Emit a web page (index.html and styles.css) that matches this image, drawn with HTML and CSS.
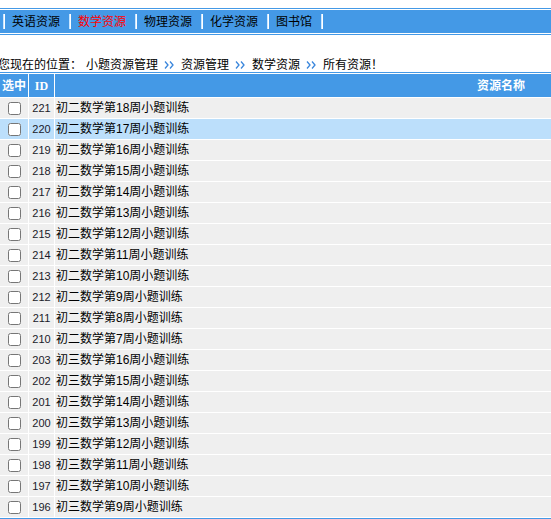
FILE: index.html
```html
<!DOCTYPE html>
<html lang="zh">
<head>
<meta charset="utf-8">
<title>数学资源</title>
<link rel="stylesheet" href="styles.css">
</head>
<body>
<div class="nav">
  <div class="nav-bar">
    <span class="sep"></span><a class="nav-item">英语资源</a>
    <span class="sep"></span><a class="nav-item active">数学资源</a>
    <span class="sep"></span><a class="nav-item">物理资源</a>
    <span class="sep"></span><a class="nav-item">化学资源</a>
    <span class="sep"></span><a class="nav-item">图书馆</a>
    <span class="sep"></span>
  </div>
</div>
<div class="crumbs">
  <span class="lead">您现在的位置：</span><span>小题资源管理</span><span class="arr"><svg width="11" height="8" viewBox="0 0 11 8"><path d="M1 0.5 L4 4 L1 7.5 M6 0.5 L9 4 L6 7.5" fill="none" stroke="#3a86dc" stroke-width="1.3"/></svg></span><span>资源管理</span><span class="arr"><svg width="11" height="8" viewBox="0 0 11 8"><path d="M1 0.5 L4 4 L1 7.5 M6 0.5 L9 4 L6 7.5" fill="none" stroke="#3a86dc" stroke-width="1.3"/></svg></span><span>数学资源</span><span class="arr"><svg width="11" height="8" viewBox="0 0 11 8"><path d="M1 0.5 L4 4 L1 7.5 M6 0.5 L9 4 L6 7.5" fill="none" stroke="#3a86dc" stroke-width="1.3"/></svg></span><span>所有资源！</span>
</div>
<table class="list">
  <thead>
    <tr><th class="c-sel">选中</th><th class="c-id">ID</th><th class="c-name">资源名称</th></tr>
  </thead>
  <tbody>
    <tr><td class="c-sel"><input type="checkbox"></td><td class="c-id">221</td><td class="c-name">初二数学第18周小题训练</td></tr>
    <tr class="hl"><td class="c-sel"><input type="checkbox"></td><td class="c-id">220</td><td class="c-name">初二数学第17周小题训练</td></tr>
    <tr><td class="c-sel"><input type="checkbox"></td><td class="c-id">219</td><td class="c-name">初二数学第16周小题训练</td></tr>
    <tr><td class="c-sel"><input type="checkbox"></td><td class="c-id">218</td><td class="c-name">初二数学第15周小题训练</td></tr>
    <tr><td class="c-sel"><input type="checkbox"></td><td class="c-id">217</td><td class="c-name">初二数学第14周小题训练</td></tr>
    <tr><td class="c-sel"><input type="checkbox"></td><td class="c-id">216</td><td class="c-name">初二数学第13周小题训练</td></tr>
    <tr><td class="c-sel"><input type="checkbox"></td><td class="c-id">215</td><td class="c-name">初二数学第12周小题训练</td></tr>
    <tr><td class="c-sel"><input type="checkbox"></td><td class="c-id">214</td><td class="c-name">初二数学第11周小题训练</td></tr>
    <tr><td class="c-sel"><input type="checkbox"></td><td class="c-id">213</td><td class="c-name">初二数学第10周小题训练</td></tr>
    <tr><td class="c-sel"><input type="checkbox"></td><td class="c-id">212</td><td class="c-name">初二数学第9周小题训练</td></tr>
    <tr><td class="c-sel"><input type="checkbox"></td><td class="c-id">211</td><td class="c-name">初二数学第8周小题训练</td></tr>
    <tr><td class="c-sel"><input type="checkbox"></td><td class="c-id">210</td><td class="c-name">初二数学第7周小题训练</td></tr>
    <tr><td class="c-sel"><input type="checkbox"></td><td class="c-id">203</td><td class="c-name">初三数学第16周小题训练</td></tr>
    <tr><td class="c-sel"><input type="checkbox"></td><td class="c-id">202</td><td class="c-name">初三数学第15周小题训练</td></tr>
    <tr><td class="c-sel"><input type="checkbox"></td><td class="c-id">201</td><td class="c-name">初三数学第14周小题训练</td></tr>
    <tr><td class="c-sel"><input type="checkbox"></td><td class="c-id">200</td><td class="c-name">初三数学第13周小题训练</td></tr>
    <tr><td class="c-sel"><input type="checkbox"></td><td class="c-id">199</td><td class="c-name">初三数学第12周小题训练</td></tr>
    <tr><td class="c-sel"><input type="checkbox"></td><td class="c-id">198</td><td class="c-name">初三数学第11周小题训练</td></tr>
    <tr><td class="c-sel"><input type="checkbox"></td><td class="c-id">197</td><td class="c-name">初三数学第10周小题训练</td></tr>
    <tr><td class="c-sel"><input type="checkbox"></td><td class="c-id">196</td><td class="c-name">初三数学第9周小题训练</td></tr>
  </tbody>
</table>
</body>
</html>
```
FILE: styles.css
```css
html, body {
  overflow: hidden;
}
body {
  margin: 0;
  background: #fff;
  font-family: "Liberation Sans", "Noto Sans CJK SC", sans-serif;
  font-size: 12px;
  color: #000;
}
.nav {
  margin-top: 8px;
  border-top: 1px solid #4499e6;
  border-bottom: 1px solid #4499e6;
  padding: 1px 0;
}
.nav-bar {
  height: 23px;
  background: #4499e6;
  display: flex;
  align-items: center;
  padding-left: 3px;
}
.sep {
  width: 1px;
  height: 15px;
  background: #c9e6ff;
  border-right: 1px solid #ffffff;
  margin-right: 7px;
}
.nav-item {
  margin-right: 9px;
  line-height: 14px;
  color: #000;
  white-space: nowrap;
}
.nav-item.active {
  color: #ff0000;
}
.crumbs {
  height: 37px;
  box-sizing: border-box;
  padding-top: 22px;
  margin-left: -2px;
  line-height: 14px;
  white-space: nowrap;
  display: flex;
  align-items: center;
  align-content: flex-start;
  height: 37px;
}
.crumbs > span {
  height: 14px;
}
.crumbs .lead {
  margin-right: 4px;
}
.arr {
  display: inline-flex;
  width: 23px;
  justify-content: center;
  align-items: center;
}
.list {
  margin-left: -1px;
  width: 949px;
  border-collapse: separate;
  border-spacing: 1px;
  border-top: 1px solid #4499e6;
  border-bottom: 1px solid #4499e6;
  background: #fff;
  table-layout: fixed;
}
.list th {
  height: 23px;
  padding: 0;
  background: #4499e6;
  color: #fff;
  font-weight: bold;
  font-size: 12px;
  text-align: center;
  line-height: 14px;
}
.list th.c-id {
  font-family: "Liberation Serif", serif;
}
.list td {
  height: 20px;
  padding: 0;
  background: #efefef;
  line-height: 14px;
}
.list tr.hl td {
  background: #bcdffb;
}
.c-sel {
  width: 28px;
  text-align: center;
}
.c-id {
  width: 25px;
}
td.c-id {
  text-align: center;
  font-size: 11px;
  color: #1a1a2a;
}
td.c-name {
  text-align: left;
  padding-left: 1px;
}
.c-sel input {
  margin: 0;
  width: 13px;
  height: 13px;
  vertical-align: middle;
}
```
